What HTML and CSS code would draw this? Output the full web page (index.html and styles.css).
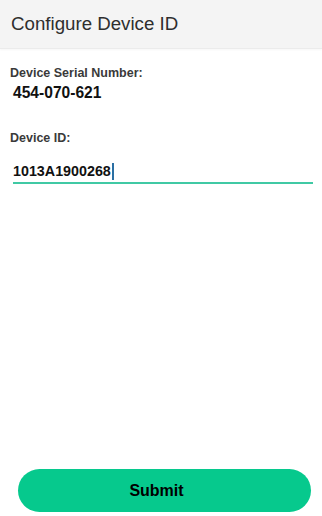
FILE: index.html
```html
<!DOCTYPE html>
<html>
<head>
<meta charset="utf-8">
<link rel="stylesheet" href="styles.css">
</head>
<body>
<div class="screen">
  <header class="header">
    <h1 class="title">Configure Device ID</h1>
  </header>
  <main class="content">
    <div class="field">
      <div class="label">Device Serial Number:</div>
      <div class="value">454-070-621</div>
    </div>
    <div class="field field-id">
      <div class="label">Device ID:</div>
      <div class="input">
        <span class="input-text">1013A1900268</span><span class="caret"></span>
      </div>
    </div>
  </main>
  <footer class="footer">
    <button class="submit">Submit</button>
  </footer>
</div>
</body>
</html>
```

FILE: styles.css
```css
* { box-sizing: border-box; }
html, body { margin: 0; padding: 0; }
body {
  font-family: "Liberation Sans", Arial, sans-serif;
  background: #ffffff;
}
.screen {
  height: 516px;
  display: flex;
  flex-direction: column;
}
.header {
  height: 49px;
  background: #f4f4f4;
  border-bottom: 1px solid #ebebeb;
  box-shadow: 0 1px 2px rgba(0,0,0,0.04);
  padding-left: 11px;
}
.title {
  margin: 0;
  font-size: 18.7px;
  font-weight: normal;
  line-height: 48px;
  color: #2e2e2e;
}
.content {
  flex: 1;
  padding: 16px 9px 0 10px;
}
.label {
  font-size: 12.5px;
  font-weight: bold;
  color: #3a3a3a;
  line-height: 16px;
}
.value {
  margin-top: 3px;
  padding-left: 3px;
  font-size: 15.6px;
  font-weight: bold;
  color: #111;
  line-height: 18px;
}
.field-id { margin-top: 28px; }
.input {
  margin-top: 17px;
  margin-left: 3px;
  height: 21px;
  border-bottom: 2px solid #40c9a4;
  display: flex;
  align-items: flex-start;
}
.input-text {
  font-size: 14.3px;
  font-weight: bold;
  color: #111;
  line-height: 17px;
}
.caret {
  width: 2px;
  height: 17px;
  margin-left: 1px;
  background: #2b6fa3;
}
.footer {
  padding: 0 11px 4px 18px;
}
.submit {
  width: 100%;
  height: 43px;
  border: none;
  border-radius: 22px;
  background: #06c98d;
  padding: 0 16px 0 0;
  font-family: "Liberation Sans", Arial, sans-serif;
  font-size: 16px;
  font-weight: bold;
  color: #000;
}
```
